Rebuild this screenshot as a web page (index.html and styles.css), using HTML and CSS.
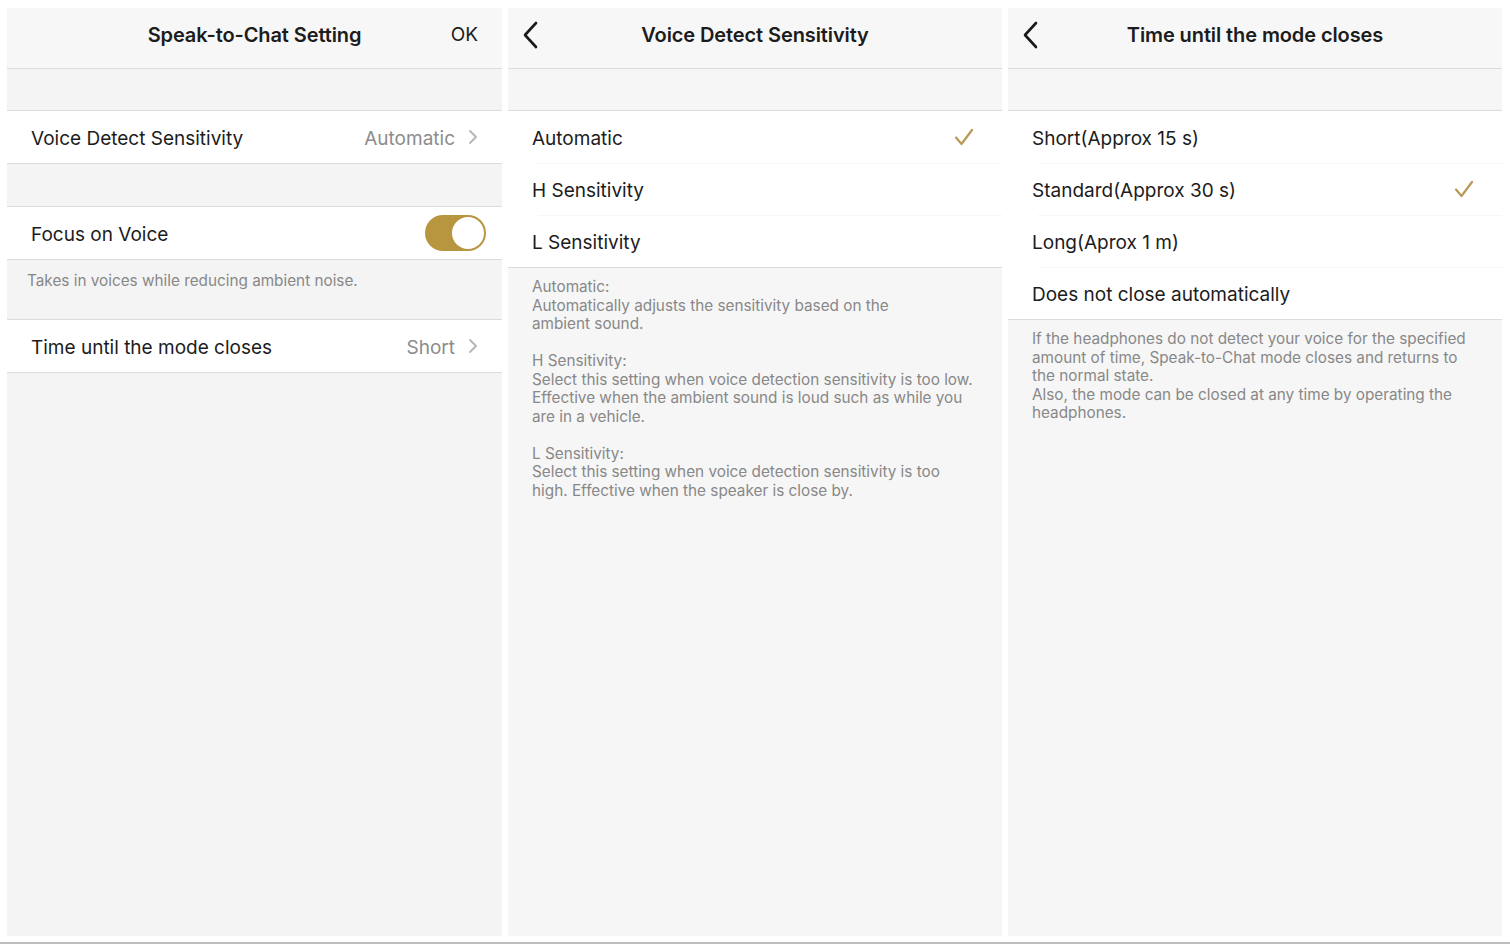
FILE: index.html
```html
<!DOCTYPE html>
<html lang="en">
<head>
<meta charset="utf-8">
<title>Speak-to-Chat Setting</title>
<link rel="stylesheet" href="styles.css">
</head>
<body>
<div class="screens">
  <section class="panel panel-main">
    <header class="nav">
      <span class="nav-side"></span>
      <h1 class="nav-title">Speak-to-Chat Setting</h1>
      <span class="nav-side nav-ok">OK</span>
    </header>
    <div class="spacer"></div>
    <div class="group">
      <div class="row">
        <span class="row-label">Voice Detect Sensitivity</span>
        <span class="row-value">Automatic</span>
        <svg class="chev" width="10" height="16" viewBox="0 0 10 16"><path d="M2 2 L8 8 L2 14" fill="none" stroke="#b5b5b5" stroke-width="1.8" stroke-linecap="round" stroke-linejoin="round"/></svg>
      </div>
    </div>
    <div class="spacer spacer-b"></div>
    <div class="group">
      <div class="row">
        <span class="row-label">Focus on Voice</span>
        <span class="toggle"><span class="knob"></span></span>
      </div>
    </div>
    <p class="note note-main">Takes in voices while reducing ambient noise.</p>
    <div class="group">
      <div class="row">
        <span class="row-label">Time until the mode closes</span>
        <span class="row-value">Short</span>
        <svg class="chev" width="10" height="16" viewBox="0 0 10 16"><path d="M2 2 L8 8 L2 14" fill="none" stroke="#b5b5b5" stroke-width="1.8" stroke-linecap="round" stroke-linejoin="round"/></svg>
      </div>
    </div>
  </section>

  <section class="panel panel-narrow">
    <header class="nav">
      <span class="nav-side"><svg class="back" width="18" height="28" viewBox="0 0 18 28"><path d="M14 2 L3 14 L14 26" fill="none" stroke="#1a1a1a" stroke-width="2.6" stroke-linecap="round" stroke-linejoin="round"/></svg></span>
      <h1 class="nav-title">Voice Detect Sensitivity</h1>
      <span class="nav-side"></span>
    </header>
    <div class="spacer"></div>
    <div class="group">
      <div class="row opt">
        <span class="row-label">Automatic</span>
        <svg class="check" width="20" height="18" viewBox="0 0 20 18"><path d="M2 9.5 L7.5 16 L18 2" fill="none" stroke="#b89a58" stroke-width="2.2" stroke-linecap="round" stroke-linejoin="round"/></svg>
      </div>
      <div class="row opt">
        <span class="row-label">H Sensitivity</span>
      </div>
      <div class="row opt">
        <span class="row-label">L Sensitivity</span>
      </div>
    </div>
    <div class="note note-list">
      <p>Automatic:<br>Automatically adjusts the sensitivity based on the<br>ambient sound.</p>
      <p>H Sensitivity:<br>Select this setting when voice detection sensitivity is too low.<br>Effective when the ambient sound is loud such as while you<br>are in a vehicle.</p>
      <p>L Sensitivity:<br>Select this setting when voice detection sensitivity is too<br>high. Effective when the speaker is close by.</p>
    </div>
  </section>

  <section class="panel panel-narrow">
    <header class="nav">
      <span class="nav-side"><svg class="back" width="18" height="28" viewBox="0 0 18 28"><path d="M14 2 L3 14 L14 26" fill="none" stroke="#1a1a1a" stroke-width="2.6" stroke-linecap="round" stroke-linejoin="round"/></svg></span>
      <h1 class="nav-title">Time until the mode closes</h1>
      <span class="nav-side"></span>
    </header>
    <div class="spacer"></div>
    <div class="group">
      <div class="row opt">
        <span class="row-label">Short(Approx 15 s)</span>
      </div>
      <div class="row opt">
        <span class="row-label">Standard(Approx 30 s)</span>
        <svg class="check" width="20" height="18" viewBox="0 0 20 18"><path d="M2 9.5 L7.5 16 L18 2" fill="none" stroke="#b89a58" stroke-width="2.2" stroke-linecap="round" stroke-linejoin="round"/></svg>
      </div>
      <div class="row opt">
        <span class="row-label">Long(Aprox 1 m)</span>
      </div>
      <div class="row opt">
        <span class="row-label">Does not close automatically</span>
      </div>
    </div>
    <div class="note note-list">
      <p>If the headphones do not detect your voice for the specified<br>amount of time, Speak-to-Chat mode closes and returns to<br>the normal state.<br>Also, the mode can be closed at any time by operating the<br>headphones.</p>
    </div>
  </section>
</div>
<div class="baseline"></div>
</body>
</html>
```

FILE: styles.css
```css
* { box-sizing: border-box; }
html, body { margin: 0; padding: 0; }
body {
  background: #ffffff;
  font-family: Inter, "Noto Sans", "Liberation Sans", sans-serif;
  color: #1c1c1c;
  width: 1510px;
  height: 944px;
  overflow: hidden;
}
.screens {
  display: flex;
  gap: 6px;
  padding: 8px 0 0 7px;
  height: 936px;
}
.panel {
  width: 495px;
  height: 928px;
  background: #f6f6f6;
  display: flex;
  flex-direction: column;
}
.panel-narrow { width: 494px; }
.panel-main { background: #f4f4f4; }
.nav {
  height: 61px;
  flex: none;
  display: flex;
  align-items: center;
  background: #f7f7f7;
  border-bottom: 1px solid #dcdcdc;
  padding: 0 24px 7px 12px;
}
.nav-side {
  width: 60px;
  flex: none;
  display: flex;
  align-items: center;
}
.nav-side:last-child { width: 48px; }
.nav-ok {
  justify-content: flex-end;
  font-size: 19px;
  color: #1c1c1c;
}
.nav-title {
  flex: 1;
  margin: 0;
  text-align: center;
  font-size: 20px;
  font-weight: 600;
  letter-spacing: -0.1px;
}
.back { margin-left: 2px; }
.spacer { height: 41px; flex: none; }
.spacer-b { height: 42px; }
.group {
  background: #ffffff;
  border-top: 1px solid #dcdcdc;
  border-bottom: 1px solid #dcdcdc;
}
.row {
  height: 52px;
  display: flex;
  align-items: center;
  padding: 2px 24px 0 24px;
  font-size: 19px;
  position: relative;
}
.opt:last-child { padding-top: 3px; }
.row-label { flex: 1; }
.row-value { color: #8c8c8c; margin-right: 13px; }
.chev { flex: none; margin-top: -2px; }
.opt + .opt::before {
  content: "";
  position: absolute;
  left: 30px;
  right: 0;
  top: 0;
  height: 1px;
  background: #f7f7f7;
}
.check { margin-right: 4px; margin-top: -2px; }
.toggle {
  width: 61px;
  height: 36px;
  border-radius: 18px;
  background: #b8963f;
  display: flex;
  align-items: center;
  justify-content: flex-end;
  padding: 2px;
  margin-right: -8px;
  margin-top: -2px;
}
.knob {
  width: 32px;
  height: 32px;
  border-radius: 50%;
  background: #ffffff;
}
.note {
  margin: 0;
  color: #888888;
  font-size: 15.3px;
  line-height: 18.5px;
}
.note-main {
  height: 59px;
  padding: 12px 20px 0 20px;
}
.note-list {
  padding: 10px 24px 0 24px;
}
.note-list p { margin: 0 0 18.5px 0; }
.baseline {
  height: 2px;
  margin-top: 6px;
  background: #bdbdbd;
}
```
